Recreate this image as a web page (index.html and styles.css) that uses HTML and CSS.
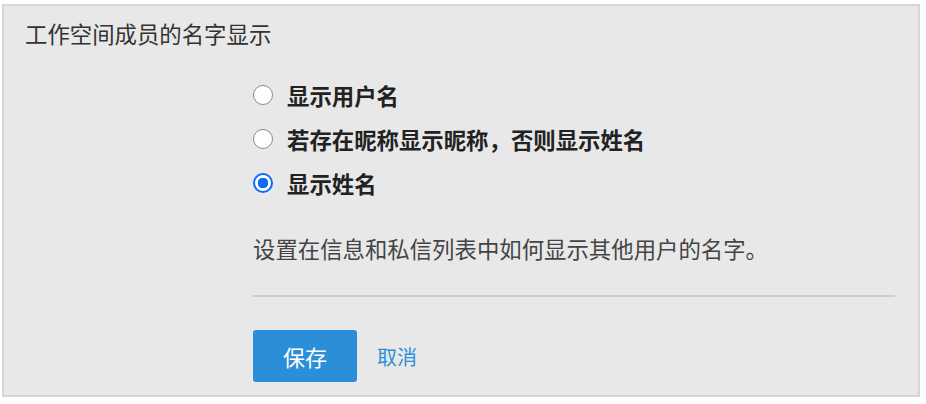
FILE: index.html
```html
<!DOCTYPE html>
<html lang="zh-CN">
  <head>
    <meta charset="UTF-8" />
    <meta name="viewport" content="width=device-width, initial-scale=1.0" />
    <title>工作空间成员的名字显示</title>
    <link rel="stylesheet" href="styles.css">
  </head>
  <body>
    <section class="panel">
      <h2 class="panel-title">工作空间成员的名字显示</h2>
      <form class="settings" id="nameForm">
        <div class="options">
          <label class="option">
            <input type="radio" name="display" value="username" />
            <span>显示用户名</span>
          </label>
          <label class="option">
            <input type="radio" name="display" value="nickname" />
            <span>若存在昵称显示昵称，否则显示姓名</span>
          </label>
          <label class="option">
            <input type="radio" name="display" value="fullname" checked />
            <span>显示姓名</span>
          </label>
        </div>
        <p class="hint">设置在信息和私信列表中如何显示其他用户的名字。</p>
        <hr class="divider" />
        <div class="actions">
          <button type="submit" class="btn-save">保存</button>
          <a href="#" class="btn-cancel">取消</a>
        </div>
      </form>
    </section>
  </body>
</html>
```

FILE: styles.css
```css
body {
  margin: 4px 6px 0 2px;
  background: #fff;
  font-family: "Noto Sans CJK SC", "Noto Sans", sans-serif;
  color: #333;
}
.panel {
  height: 377px;
  background: #e8e8e8;
  border: 2px solid #d6d6d6;
  padding: 12px 0 0 21px;
}
.panel-title {
  margin: 0;
  font-size: 22.4px;
  line-height: 30px;
  font-weight: normal;
  color: #333;
}
.settings {
  margin: 25px 0 0 228px;
  width: 642px;
}
.options {
  display: flex;
  flex-direction: column;
}
.option {
  display: flex;
  align-items: center;
  gap: 14px;
  height: 44px;
  font-size: 22.4px;
  font-weight: bold;
  color: #222;
  cursor: pointer;
}
.option input {
  appearance: none;
  -webkit-appearance: none;
  margin: 0;
  width: 20px;
  height: 20px;
  border-radius: 50%;
  border: 1px solid #8a8a8a;
  background: #fff;
  box-sizing: border-box;
}
.option input:checked {
  border: 2px solid #0a6cf5;
  background: radial-gradient(circle, #0a6cf5 0 5px, #fff 5.5px);
}
.hint {
  margin: 28px 0 0;
  font-size: 22.4px;
  line-height: 30px;
  color: #444;
}
.divider {
  margin: 32px 0 0;
  border: none;
  height: 2px;
  background: #cdcdcd;
}
.actions {
  display: flex;
  align-items: center;
  gap: 20px;
  margin-top: 33px;
}
.btn-save {
  width: 104px;
  height: 52px;
  border: none;
  border-radius: 3px;
  background: #2a8fd8;
  color: #fff;
  font-family: inherit;
  font-size: 22px;
  cursor: pointer;
}
.btn-cancel {
  font-size: 20px;
  color: #2b8fd6;
  text-decoration: none;
}
```
